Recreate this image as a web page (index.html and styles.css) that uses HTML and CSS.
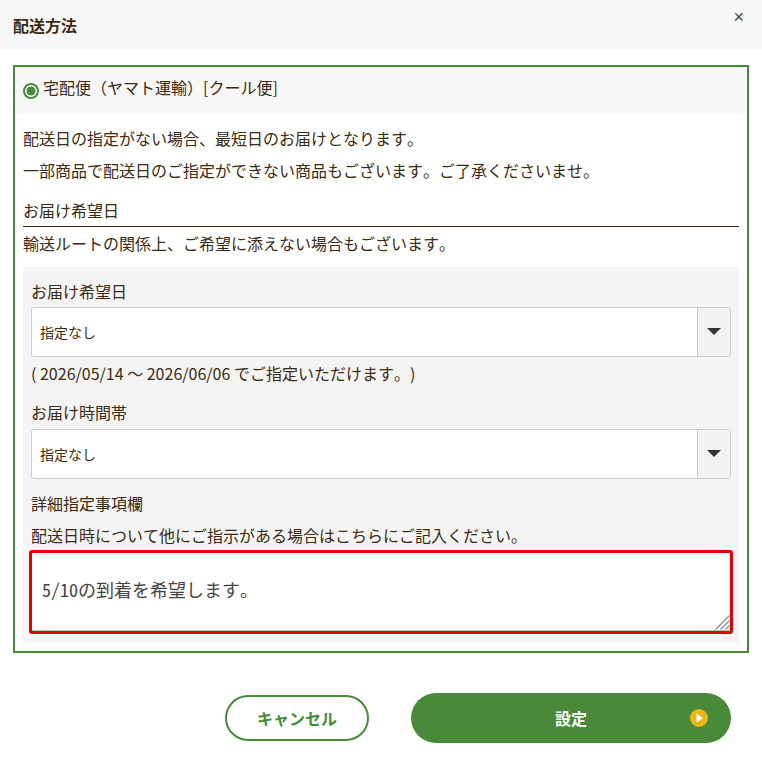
FILE: index.html
```html
<!DOCTYPE html>
<html lang="ja">
<head>
  <title>配送方法</title>
  <meta charset="UTF-8">
  <link rel="stylesheet" href="styles.css">
</head>
<body>
  <div id="modal">
    <header class="modal-head">
      <h2>配送方法</h2>
      <button class="close" type="button">×</button>
    </header>

    <div class="method-box">
      <label class="method-label">
        <input type="radio" name="method" checked>
        <span>宅配便（ヤマト運輸）[クール便]</span>
      </label>

      <div class="method-body">
        <p class="note">配送日の指定がない場合、最短日のお届けとなります。</p>
        <p class="note">一部商品で配送日のご指定ができない商品もございます。ご了承くださいませ。</p>

        <h3>お届け希望日</h3>
        <p class="note">輸送ルートの関係上、ご希望に添えない場合もございます。</p>

        <div class="panel">
          <div class="field-title">お届け希望日</div>
          <div class="select-wrap">
            <select>
              <option>指定なし</option>
            </select>
            <span class="select-arrow"></span>
          </div>
          <p class="range">( 2026/05/14 ～ 2026/06/06 でご指定いただけます。)</p>

          <div class="field-title time-title">お届け時間帯</div>
          <div class="select-wrap">
            <select>
              <option>指定なし</option>
            </select>
            <span class="select-arrow"></span>
          </div>

          <div class="field-title detail-title">詳細指定事項欄</div>
          <p class="detail-note">配送日時について他にご指示がある場合はこちらにご記入ください。</p>
          <div class="detail-wrap">
            <textarea class="detail-input">5/10の到着を希望します。</textarea>
            <svg class="detail-grip" width="15" height="15" viewBox="0 0 15 15">
              <path d="M0.5 14.5 L14.5 0.5 M5.5 14.5 L14.5 5.5 M10.5 14.5 L14.5 10.5" stroke="#8a8a8a" stroke-width="1.3" fill="none"/>
            </svg>
          </div>
        </div>
      </div>
    </div>

    <div class="actions">
      <button class="btn-cancel" type="button">キャンセル</button>
      <button class="btn-submit" type="button">
        設定
        <svg class="btn-icon" width="18" height="18" viewBox="0 0 18 18">
          <circle cx="9" cy="9" r="9" fill="#e8b71c"/>
          <path d="M6.5 4.6 L13 9 L6.5 13.4 Z" fill="#fff"/>
        </svg>
      </button>
    </div>
  </div>
</body>
</html>
```

FILE: styles.css
```css
:root {
  --green: #488a39;
  --text: #3c2a12;
  --head-bg: #f7f7f7;
  --panel-bg: #f4f4f4;
  --line: #cccccc;
}

* {
  box-sizing: border-box;
}

body {
  margin: 0;
  background: #ffffff;
  color: var(--text);
  font-family: "Noto Sans CJK JP", "Noto Sans", sans-serif;
  font-size: 16px;
  font-kerning: none;
  text-spacing-trim: space-all;
  line-height: 24px;
}

#modal {
  width: 762px;
}

.modal-head {
  display: flex;
  justify-content: space-between;
  height: 49px;
  padding: 13px 18px 0 13px;
  background: var(--head-bg);
}

h2 {
  margin: 0;
  font-size: 16px;
  font-weight: 700;
  line-height: 24px;
}

.close {
  height: 20px;
  margin-top: -6px;
  padding: 0;
  border: none;
  background: none;
  color: #444444;
  font-family: "Liberation Sans", sans-serif;
  font-size: 18px;
  line-height: 20px;
}

.method-box {
  width: 736px;
  height: 588px;
  margin: 16px 0 0 13px;
  border: 2px solid var(--green);
}

.method-label {
  display: flex;
  align-items: flex-start;
  gap: 4px;
  height: 47px;
  padding: 8px 8px 0;
  background: var(--head-bg);
}

.method-label input {
  appearance: none;
  width: 16px;
  height: 16px;
  margin: 8px 0 0;
  border: 2px solid var(--green);
  border-radius: 50%;
  background: radial-gradient(circle, var(--green) 0 4.2px, #ffffff 4.8px);
}

.method-body {
  padding: 12px 8px 0;
}

.note {
  margin: 0 0 8px;
}

h3 {
  margin: 16px 0 4px;
  padding-bottom: 4px;
  border-bottom: 1px solid var(--text);
  font-size: 16px;
  font-weight: 400;
  line-height: 24px;
}

.panel {
  height: 376px;
  margin-top: 12px;
  padding: 12px 8px 0;
  background: var(--panel-bg);
}

.field-title {
  margin-bottom: 4px;
}

.time-title {
  margin-bottom: 5px;
}

.select-wrap {
  position: relative;
  height: 50px;
}

.select-wrap select {
  appearance: none;
  display: block;
  width: 100%;
  height: 50px;
  padding: 0 8px;
  border: 1px solid var(--line);
  border-radius: 3px;
  background: #ffffff;
  color: var(--text);
  font-family: inherit;
  font-size: 14px;
}

.select-arrow {
  position: absolute;
  top: 1px;
  right: 1px;
  bottom: 1px;
  width: 33px;
  border-left: 1px solid var(--line);
  border-radius: 0 2px 2px 0;
  background: #f2f2f2;
}

.select-arrow::after {
  content: '';
  position: absolute;
  top: 20px;
  left: 9px;
  border-top: 7px solid #333333;
  border-left: 7px solid transparent;
  border-right: 7px solid transparent;
}

.range {
  margin: 4px 0 15px;
}

.detail-title {
  margin-top: 12px;
  margin-bottom: 8px;
}

.detail-note {
  margin: 0 0 3px;
}

.detail-wrap {
  position: relative;
  width: 704px;
  height: 84px;
  margin-left: -2px;
}

.detail-input {
  display: block;
  width: 100%;
  height: 84px;
  padding: 24px 10px 0;
  border: 3px solid #e00000;
  border-radius: 3px;
  background: #ffffff;
  box-shadow: inset 0 -1px 0 #bbbbbb;
  color: #444444;
  font-family: "Noto Sans Mono CJK JP", "Noto Sans CJK JP", monospace;
  font-size: 18px;
  font-kerning: none;
  line-height: 24px;
  outline: none;
  resize: none;
}

.detail-grip {
  position: absolute;
  right: 3px;
  bottom: 4px;
}

.actions {
  display: flex;
  justify-content: flex-end;
  align-items: center;
  gap: 42px;
  padding: 40px 31px 0 0;
}

.btn-cancel {
  width: 144px;
  height: 46px;
  border: 2px solid var(--green);
  border-radius: 23px;
  background: #ffffff;
  color: var(--green);
  font-family: inherit;
  font-size: 16px;
  font-weight: 700;
}

.btn-submit {
  position: relative;
  width: 320px;
  height: 50px;
  border: none;
  border-radius: 25px;
  background: var(--green);
  color: #ffffff;
  font-family: inherit;
  font-size: 16px;
  font-weight: 700;
}

.btn-icon {
  position: absolute;
  top: 16px;
  right: 23px;
}
```
